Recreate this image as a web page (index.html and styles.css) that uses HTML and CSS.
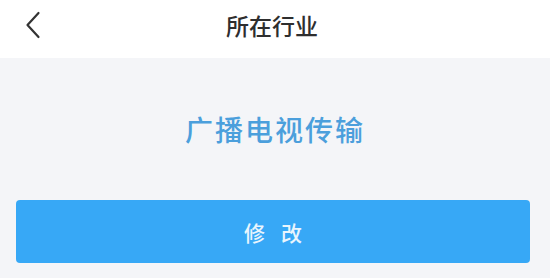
FILE: index.html
```html
<!DOCTYPE html>
<html lang="zh">
<head>
<meta charset="utf-8">
<link rel="stylesheet" href="styles.css">
</head>
<body>
<div class="page">
  <header class="header">
    <span class="back">
      <svg width="18" height="28" viewBox="0 0 18 28"><path d="M14.5 2 L3.5 14 L14.5 26" fill="none" stroke="#333" stroke-width="2.2" stroke-linecap="round" stroke-linejoin="round"/></svg>
    </span>
    <h1 class="title">所在行业</h1>
  </header>
  <main class="main">
    <div class="industry">广播电视传输</div>
    <button class="btn">修改</button>
  </main>
</div>
</body>
</html>
```
FILE: styles.css
```css
* { box-sizing: border-box; }
html, body { margin: 0; padding: 0; }
body {
  width: 550px;
  height: 278px;
  overflow: hidden;
  font-family: "Noto Sans CJK SC", "Noto Sans", sans-serif;
  background: #f4f5f8;
}
.page { display: flex; flex-direction: column; height: 278px; }
.header {
  position: relative;
  height: 58px;
  background: #ffffff;
  display: flex;
  align-items: center;
  justify-content: center;
}
.back {
  position: absolute;
  left: 24px;
  top: 11px;
  display: flex;
}
.title {
  margin: 0;
  font-size: 23px;
  font-weight: 500;
  color: #2e2e2e;
  line-height: 30px;
  margin-top: -8px;
  margin-left: -6px;
}
.main {
  flex: 1;
  display: flex;
  flex-direction: column;
  align-items: center;
  padding-top: 55px;
}
.industry {
  font-size: 28px;
  font-weight: 500;
  line-height: 32px;
  letter-spacing: 2px;
  text-indent: 2px;
  color: #4b9fdc;
  margin-left: -2px;
}
.btn {
  margin-top: 55px;
  width: 514px;
  height: 63px;
  border: none;
  border-radius: 4px;
  background: #37a8f6;
  color: #e9f5fd;
  font-family: "Noto Sans CJK SC", "Noto Sans", sans-serif;
  font-size: 21px;
  font-weight: 500;
  letter-spacing: 16px;
  text-indent: 16px;
  padding: 0;
  margin-left: -4px;
}
```
